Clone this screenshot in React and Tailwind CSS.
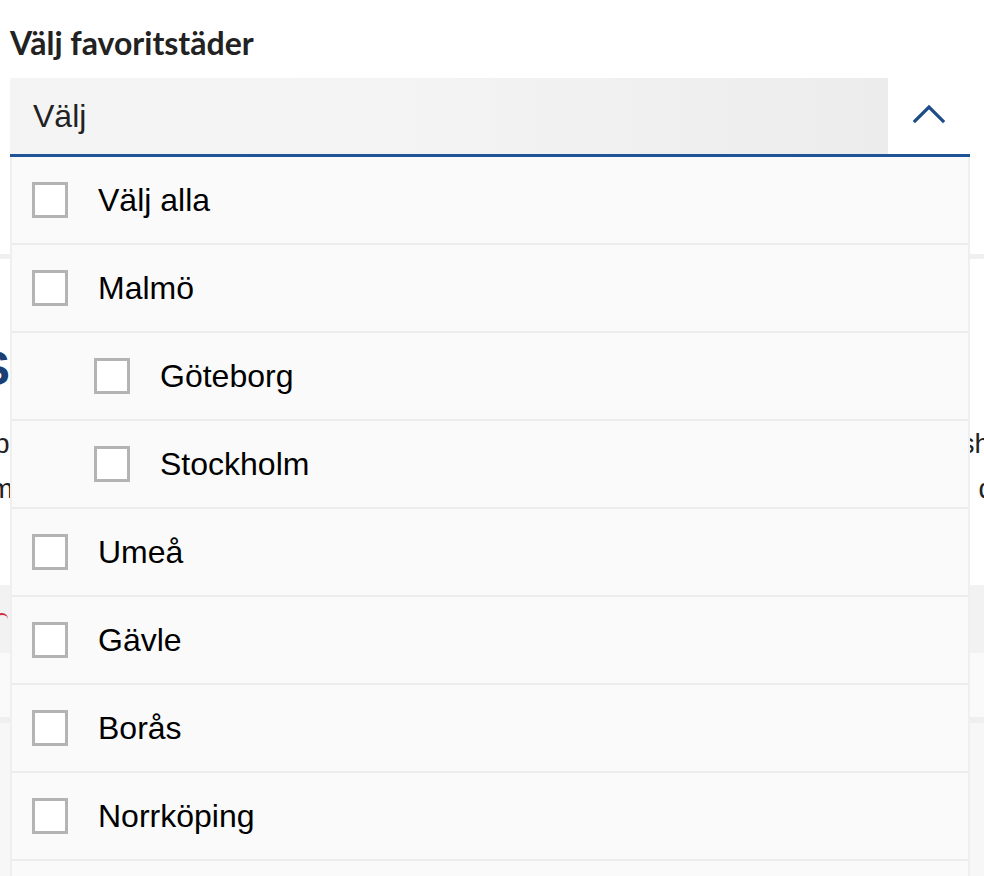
import React from "react";

const cities = [
  { name: "Välj alla", level: 0 },
  { name: "Malmö", level: 0 },
  { name: "Göteborg", level: 1 },
  { name: "Stockholm", level: 1 },
  { name: "Umeå", level: 0 },
  { name: "Gävle", level: 0 },
  { name: "Borås", level: 0 },
  { name: "Norrköping", level: 0 },
  { name: "Uppsala", level: 0 },
];

function ChevronUp() {
  return (
    <svg width="32" height="20" viewBox="0 0 32 20" fill="none">
      <path d="M2 17 L16 3 L30 17" stroke="#1d4c86" strokeWidth="3.2" strokeLinecap="square" />
    </svg>
  );
}

function Row({ city }) {
  return (
    <li className="flex h-[88px] items-center border-b-2 border-[#ececec] bg-[#fafafa]">
      <span className={city.level ? "ml-[82px]" : "ml-[20px]"}>
        <span className="block h-[36px] w-[36px] border-[3px] border-[#b4b4b7] bg-white" />
      </span>
      <span className="ml-[30px] text-[32px] leading-none text-black">{city.name}</span>
    </li>
  );
}

export default function App() {
  return (
    <div className="relative h-[876px] w-[984px] overflow-hidden bg-white font-['Liberation_Sans',Arial,sans-serif]">
      <div className="pl-[10px] pr-[14px] pt-[25px]">
        <h2 className="font-['Lato',sans-serif] text-[32px] font-bold leading-[36px] text-[#222]">
          Välj favoritstäder
        </h2>

        <div className="relative mt-[17px]">
          <div className="flex h-[79px] border-b-[3px] border-[#1f5597]">
            <div className="flex flex-1 items-center bg-gradient-to-r from-[#f4f4f4] via-[#f3f3f3] to-[#ececec] pl-[23px] text-[32px] text-[#222]">
              Välj
            </div>
            <div className="flex w-[82px] items-center justify-center bg-white pb-[4px]">
              <ChevronUp />
            </div>
          </div>

          <ul className="absolute left-0 right-0 top-full z-10 border-x-2 border-[#efefef]">
            {cities.map((c) => (
              <Row key={c.name} city={c} />
            ))}
          </ul>
        </div>
      </div>

      {/* page content behind the open list */}
      <div className="h-[97px]" />
      <div className="h-[5px] bg-[#f0f0f0]" />
      <div className="flex h-[326px] flex-col bg-white pt-[84px]">
        <div className="-ml-[22px] text-[48px] font-bold leading-[52px] text-[#1b3f73]">Se</div>
        <div className="mt-[26px] flex justify-between -mx-[6px] text-[28px] leading-[45px] text-[#222]">
          <span>pi</span>
          <span>sh</span>
        </div>
        <div className="flex justify-between -mx-[10px] text-[28px] leading-[45px] text-[#222]">
          <span>m</span>
          <span>d</span>
        </div>
      </div>
      <div className="flex h-[68px] items-center bg-[#f2f2f2]">
        <span className="-ml-[4px] block h-[12px] w-[12px] rounded-full border-t-2 border-[#d0283c]" />
      </div>
      <div className="h-[64px] bg-[#fafafa]" />
      <div className="h-[6px] bg-[#efefef]" />
      <div className="h-[200px] bg-[#f7f7f7]" />
    </div>
  );
}
